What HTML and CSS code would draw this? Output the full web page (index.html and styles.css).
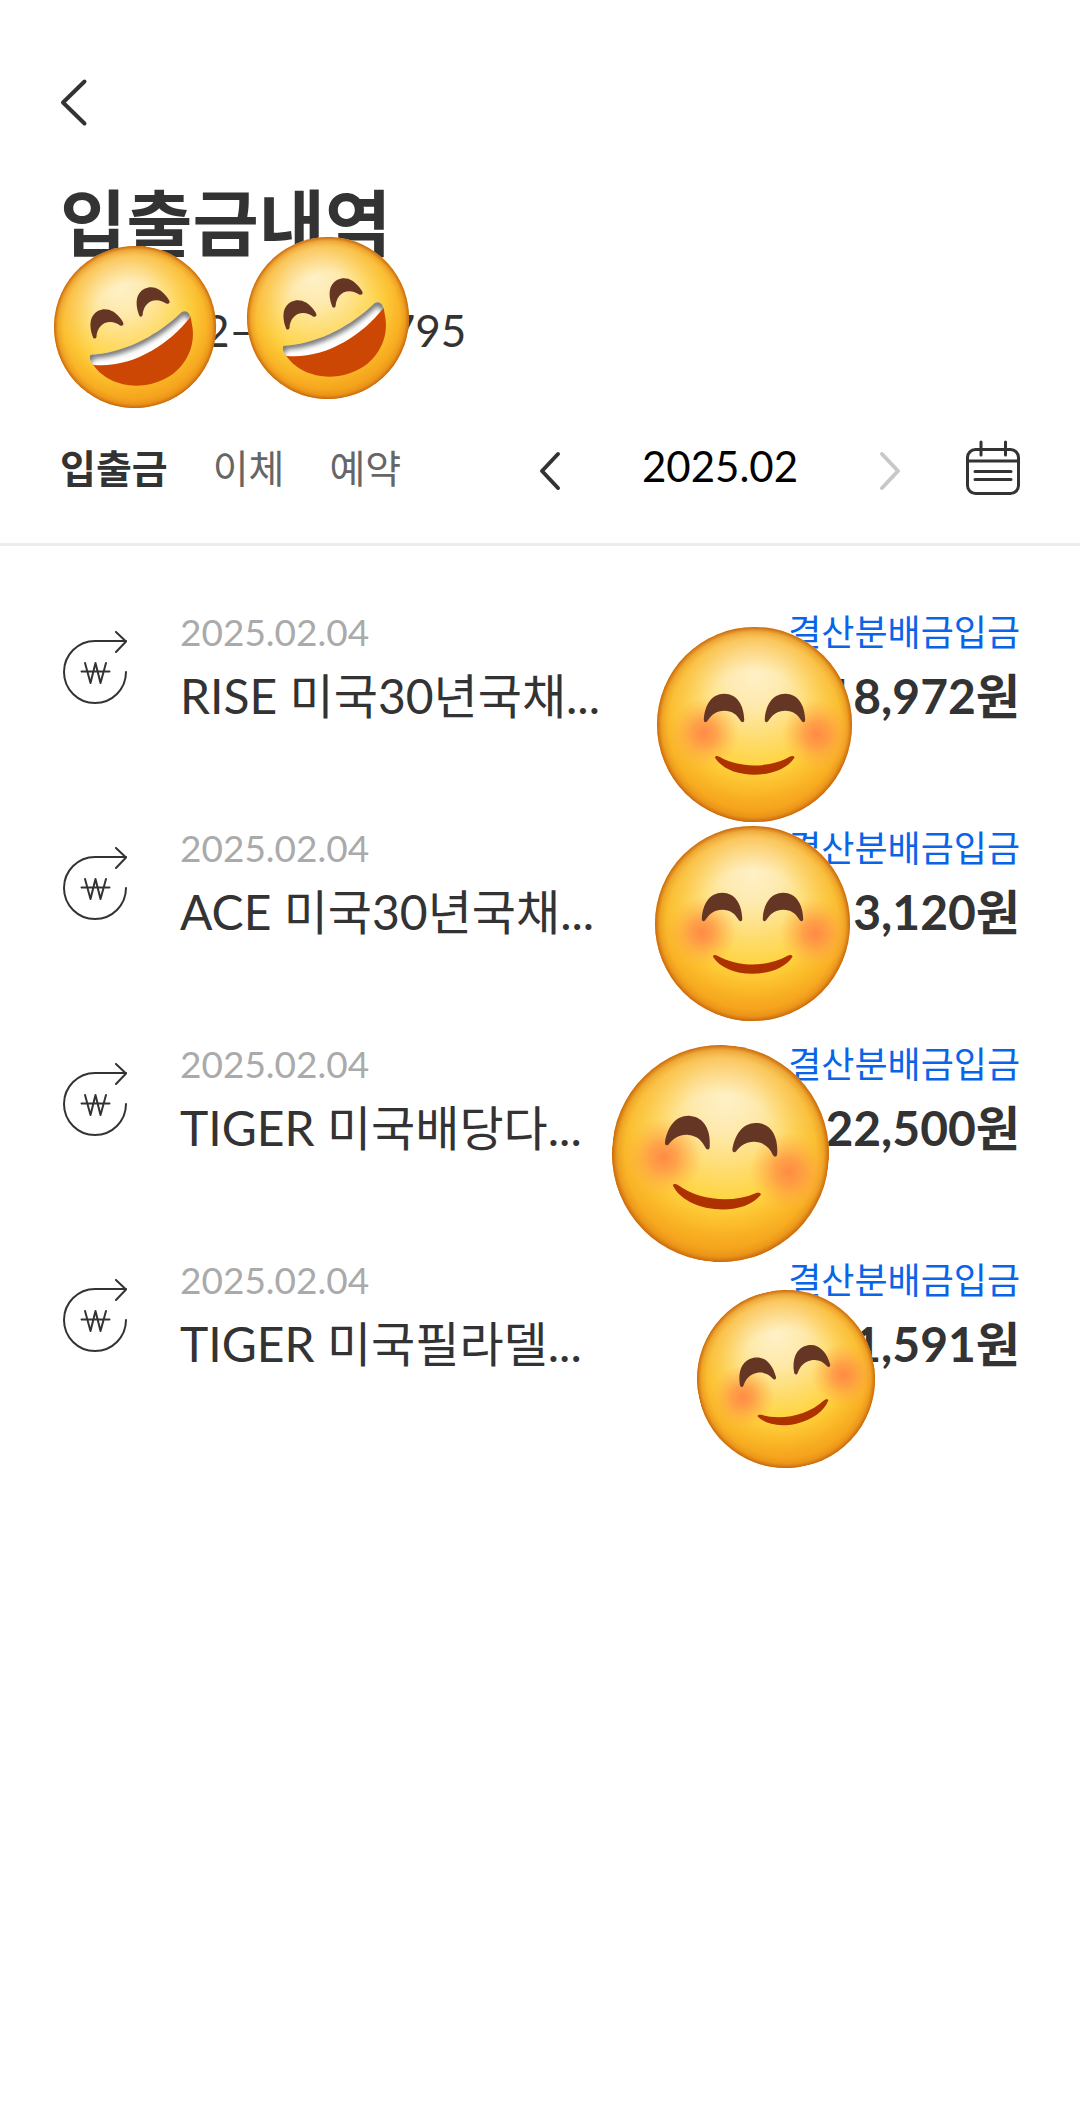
FILE: index.html
```html
<!DOCTYPE html>
<html lang="ko">
<head>
  <meta charset="UTF-8">
  <meta name="viewport" content="width=device-width, initial-scale=1">
  <title>입출금내역</title>
  <link rel="stylesheet" href="styles.css">
</head>
<body>
  <!-- 공용 아이콘 -->
  <svg class="defs" aria-hidden="true">
    <defs>
      <radialGradient id="face" gradientUnits="userSpaceOnUse" cx="0" cy="-50" r="152">
        <stop offset="0" stop-color="#fff0c6"/>
        <stop offset="0.2" stop-color="#feeaae"/>
        <stop offset="0.45" stop-color="#fedb69"/>
        <stop offset="0.6" stop-color="#ffd543"/>
        <stop offset="0.78" stop-color="#fcbc2a"/>
        <stop offset="0.93" stop-color="#f39b17"/>
        <stop offset="1" stop-color="#ef9214"/>
      </radialGradient>
      <radialGradient id="rim" gradientUnits="userSpaceOnUse" cx="0" cy="0" r="100">
        <stop offset="0.55" stop-color="#f9b424" stop-opacity="0"/>
        <stop offset="0.88" stop-color="#f6a820" stop-opacity="0.5"/>
        <stop offset="0.95" stop-color="#e8921a" stop-opacity="0.7"/>
        <stop offset="1" stop-color="#c8670e"/>
      </radialGradient>
      <radialGradient id="cheek">
        <stop offset="0" stop-color="#ff8a45"/>
        <stop offset="0.35" stop-color="#ff9446" stop-opacity="0.8"/>
        <stop offset="1" stop-color="#ffae40" stop-opacity="0"/>
      </radialGradient>
      <clipPath id="teeth-clip">
        <path d="M-56 37C-56 34 -54 34 -50 34C-8 30 30 8 56 -17C61 -22 68 -19 68 -12C42 22 -4 51 -51 47C-54 44 -56 41 -56 37Z"/>
      </clipPath>
      <filter id="soft" x="-20%" y="-20%" width="140%" height="140%">
        <feGaussianBlur stdDeviation="3"/>
      </filter>
      <symbol id="smile" viewBox="-100 -100 200 200">
        <circle r="100" fill="url(#face)"/>
        <circle r="100" fill="url(#rim)"/>
        <circle cx="-52" cy="9" r="36" fill="url(#cheek)"/>
        <circle cx="64" cy="10" r="36" fill="url(#cheek)"/>
        <g fill="#653624">
          <path id="eye" d="M-52 -5C-51 -20 -44 -31.500 -31 -31.500C-18 -31.500 -11 -20 -10.500 -5C-10.500 -2 -13 -1.500 -14.500 -4C-18 -10 -23 -14 -31 -14C-39 -14 -44 -10 -48 -4C-49.500 -1.500 -52 -2 -52 -5Z"/>
          <use href="#eye" x="62.500"/>
        </g>
        <path d="M-40.500 34C-40.500 32 -38 32 -36 33C-15 45 15 45 36 33C38 32 41 32 41 34C34 45 18 51.500 0 51.500C-18 51.500 -34 45 -40.500 34Z" fill="#ad3200"/>
      </symbol>
      <symbol id="laugh" viewBox="-100 -100 200 200">
        <g transform="rotate(-20)">
          <circle r="100" fill="url(#face)"/>
          <circle r="100" fill="url(#rim)"/>
        </g>
        <g fill="#653624">
          <path id="wink" d="M-51.500 13.500C-55 5 -57 -7 -52 -14C-46 -23 -35 -24 -27 -19C-21 -15 -16 -9 -14.500 -5C-13.500 -2 -16 -1 -18.500 -2C-24 -6 -31 -7.500 -38 -4.500C-44 -1 -47 5 -47.500 12C-48 14.500 -50.500 15 -51.500 13.500Z"/>
          <use href="#wink" x="57" y="-27"/>
        </g>
        <path d="M-54 43C-20 48 40 26 65 -14C69 -15 69 -11 70 -5C76 22 64 46 44 60C14 80 -34 77 -54 43Z" fill="#cc4703"/>
        <g clip-path="url(#teeth-clip)">
          <rect x="-60" y="-30" width="140" height="90" fill="#fff"/>
          <path d="M-57 44C-57 33 -54 34 -50 34C-8 30 30 8 56 -17C61 -22 67 -20 71 -10" fill="none" stroke="#777" stroke-width="10" filter="url(#soft)"/>
        </g>
      </symbol>
      <symbol id="won" viewBox="0 0 68 74">
        <g fill="none" stroke="#333" stroke-width="2" stroke-linecap="round" stroke-linejoin="round">
          <path d="M66 41A31 31 0 1 1 35 10H66"/>
          <path d="M56 1L66 10.500L56 21"/>
          <path d="M25 32L30.500 52L35.500 32L40.500 52L46 32M21.500 40.500H49.500"/>
        </g>
      </symbol>
    </defs>
  </svg>

  <header class="header">
    <button class="icon-btn back" type="button" aria-label="뒤로">
      <svg width="28" height="48" viewBox="0 0 28 48"><path d="M24.500 2.500L3 23.500L24.500 44.500"/></svg>
    </button>
    <h1 class="title">입출금내역</h1>
    <p class="account">000-002–0-0-00795</p>
    <svg class="sticker laugh-1" aria-hidden="true"><use href="#laugh"/></svg>
    <svg class="sticker laugh-2" aria-hidden="true"><use href="#laugh"/></svg>

    <div class="toolbar">
      <nav class="tabs">
        <a class="tab active" href="#">입출금</a>
        <a class="tab" href="#">이체</a>
        <a class="tab" href="#">예약</a>
      </nav>
      <div class="month">
        <button class="icon-btn" type="button" aria-label="이전 달">
          <svg width="20" height="38" viewBox="0 0 20 38"><path d="M18 2L2 19L18 36"/></svg>
        </button>
        <span class="month-text">2025.02</span>
        <button class="icon-btn next" type="button" aria-label="다음 달">
          <svg width="20" height="38" viewBox="0 0 20 38"><path d="M2 2L18 19L2 36"/></svg>
        </button>
      </div>
      <button class="icon-btn calendar" type="button" aria-label="달력">
        <svg width="54" height="56" viewBox="0 0 54 56">
          <rect x="1.500" y="9.500" width="51" height="44" rx="8"/>
          <path d="M2 21H52M15 2V15M39.500 2V15M9 31.500H45M9 39.500H45"/>
        </svg>
      </button>
    </div>
  </header>

  <main>
    <ul class="list">
      <li class="item">
        <svg class="won" aria-hidden="true"><use href="#won"/></svg>
        <div class="info">
          <span class="date">2025.02.04</span>
          <span class="name">RISE 미국30년국채...</span>
        </div>
        <div class="deposit">
          <span class="kind">결산분배금입금</span>
          <strong class="amount">18,972원</strong>
        </div>
        <svg class="sticker smile-1" aria-hidden="true"><use href="#smile"/></svg>
      </li>
      <li class="item">
        <svg class="won" aria-hidden="true"><use href="#won"/></svg>
        <div class="info">
          <span class="date">2025.02.04</span>
          <span class="name">ACE 미국30년국채...</span>
        </div>
        <div class="deposit">
          <span class="kind">결산분배금입금</span>
          <strong class="amount">3,120원</strong>
        </div>
        <svg class="sticker smile-2" aria-hidden="true"><use href="#smile"/></svg>
      </li>
      <li class="item">
        <svg class="won" aria-hidden="true"><use href="#won"/></svg>
        <div class="info">
          <span class="date">2025.02.04</span>
          <span class="name">TIGER 미국배당다...</span>
        </div>
        <div class="deposit">
          <span class="kind">결산분배금입금</span>
          <strong class="amount">22,500원</strong>
        </div>
        <svg class="sticker smile-3" aria-hidden="true"><use href="#smile"/></svg>
      </li>
      <li class="item">
        <svg class="won" aria-hidden="true"><use href="#won"/></svg>
        <div class="info">
          <span class="date">2025.02.04</span>
          <span class="name">TIGER 미국필라델...</span>
        </div>
        <div class="deposit">
          <span class="kind">결산분배금입금</span>
          <strong class="amount">1,591원</strong>
        </div>
        <svg class="sticker smile-4" aria-hidden="true"><use href="#smile"/></svg>
      </li>
    </ul>
  </main>
</body>
</html>
```
FILE: styles.css
```css
* {
  box-sizing: border-box;
}
body {
  margin: 0;
  min-height: 100vh;
  background-color: #fff;
  color: #333;
  font-family: Lato, "Noto Sans CJK KR", sans-serif;
}
.defs {
  position: absolute;
  width: 0;
  height: 0;
}

/* 상단 */
.header {
  position: relative;
  padding: 79px 60px 47px;
  border-bottom: 3px solid #ececec;
}
.icon-btn {
  display: block;
  padding: 0;
  border: none;
  background: none;
  cursor: pointer;
}
.icon-btn svg {
  display: block;
  overflow: visible;
  fill: none;
  stroke: #333;
  stroke-width: 3;
  stroke-linecap: round;
  stroke-linejoin: round;
}
.back svg,
.month svg {
  stroke-width: 4;
}
.next svg {
  stroke: #c8c8c8;
}
.title {
  margin: 55px 0 0;
  font-size: 72px;
  line-height: 80px;
}
.account {
  margin: 44px 0 0;
  font-size: 44px;
  line-height: 48px;
}
.toolbar {
  display: flex;
  align-items: center;
  margin-top: 86px;
  height: 56px;
}
.tabs {
  display: flex;
  gap: 45px;
}
.tab {
  color: #666;
  font-size: 39px;
  line-height: 48px;
  text-decoration: none;
}
.tab.active {
  color: #333;
  font-weight: bold;
}
.month {
  display: flex;
  align-items: flex-end;
  justify-content: space-between;
  width: 360px;
  margin-left: auto;
  padding-bottom: 4px;
}
.month-text {
  color: #000;
  font-size: 42px;
  line-height: 48px;
}
.calendar {
  margin-left: 66px;
}

/* 거래 목록 */
.list {
  display: flex;
  flex-direction: column;
  gap: 96px;
  margin: 0;
  padding: 62px 60px 180px;
  list-style: none;
}
.item {
  position: relative;
  display: flex;
  align-items: center;
}
.won {
  width: 68px;
  height: 74px;
  margin-right: 52px;
}
.info,
.deposit {
  display: flex;
  flex-direction: column;
  gap: 8px;
  white-space: nowrap;
}
.deposit {
  margin-left: auto;
  align-items: flex-end;
}
.date,
.kind {
  line-height: 48px;
}
.date {
  color: #aaa;
  font-size: 37px;
}
.kind {
  color: #0a64e8;
  font-size: 36px;
}
.name,
.amount {
  font-size: 48px;
  line-height: 64px;
}

/* 가림용 스티커 */
.sticker {
  position: absolute;
}
.laugh-1,
.laugh-2 {
  width: 162px;
  height: 162px;
}
.laugh-1 {
  left: 54px;
  top: 246px;
}
.laugh-2 {
  left: 247px;
  top: 237px;
}
.smile-1,
.smile-2 {
  width: 195px;
  height: 195px;
}
.smile-1 {
  right: 168px;
  top: 19px;
}
.smile-2 {
  right: 170px;
  top: 2px;
}
.smile-3 {
  right: 191px;
  top: 5px;
  width: 217px;
  height: 217px;
  transform: rotate(6deg);
}
.smile-4 {
  right: 145px;
  top: 34px;
  width: 178px;
  height: 178px;
  transform: rotate(-13deg);
}
```
